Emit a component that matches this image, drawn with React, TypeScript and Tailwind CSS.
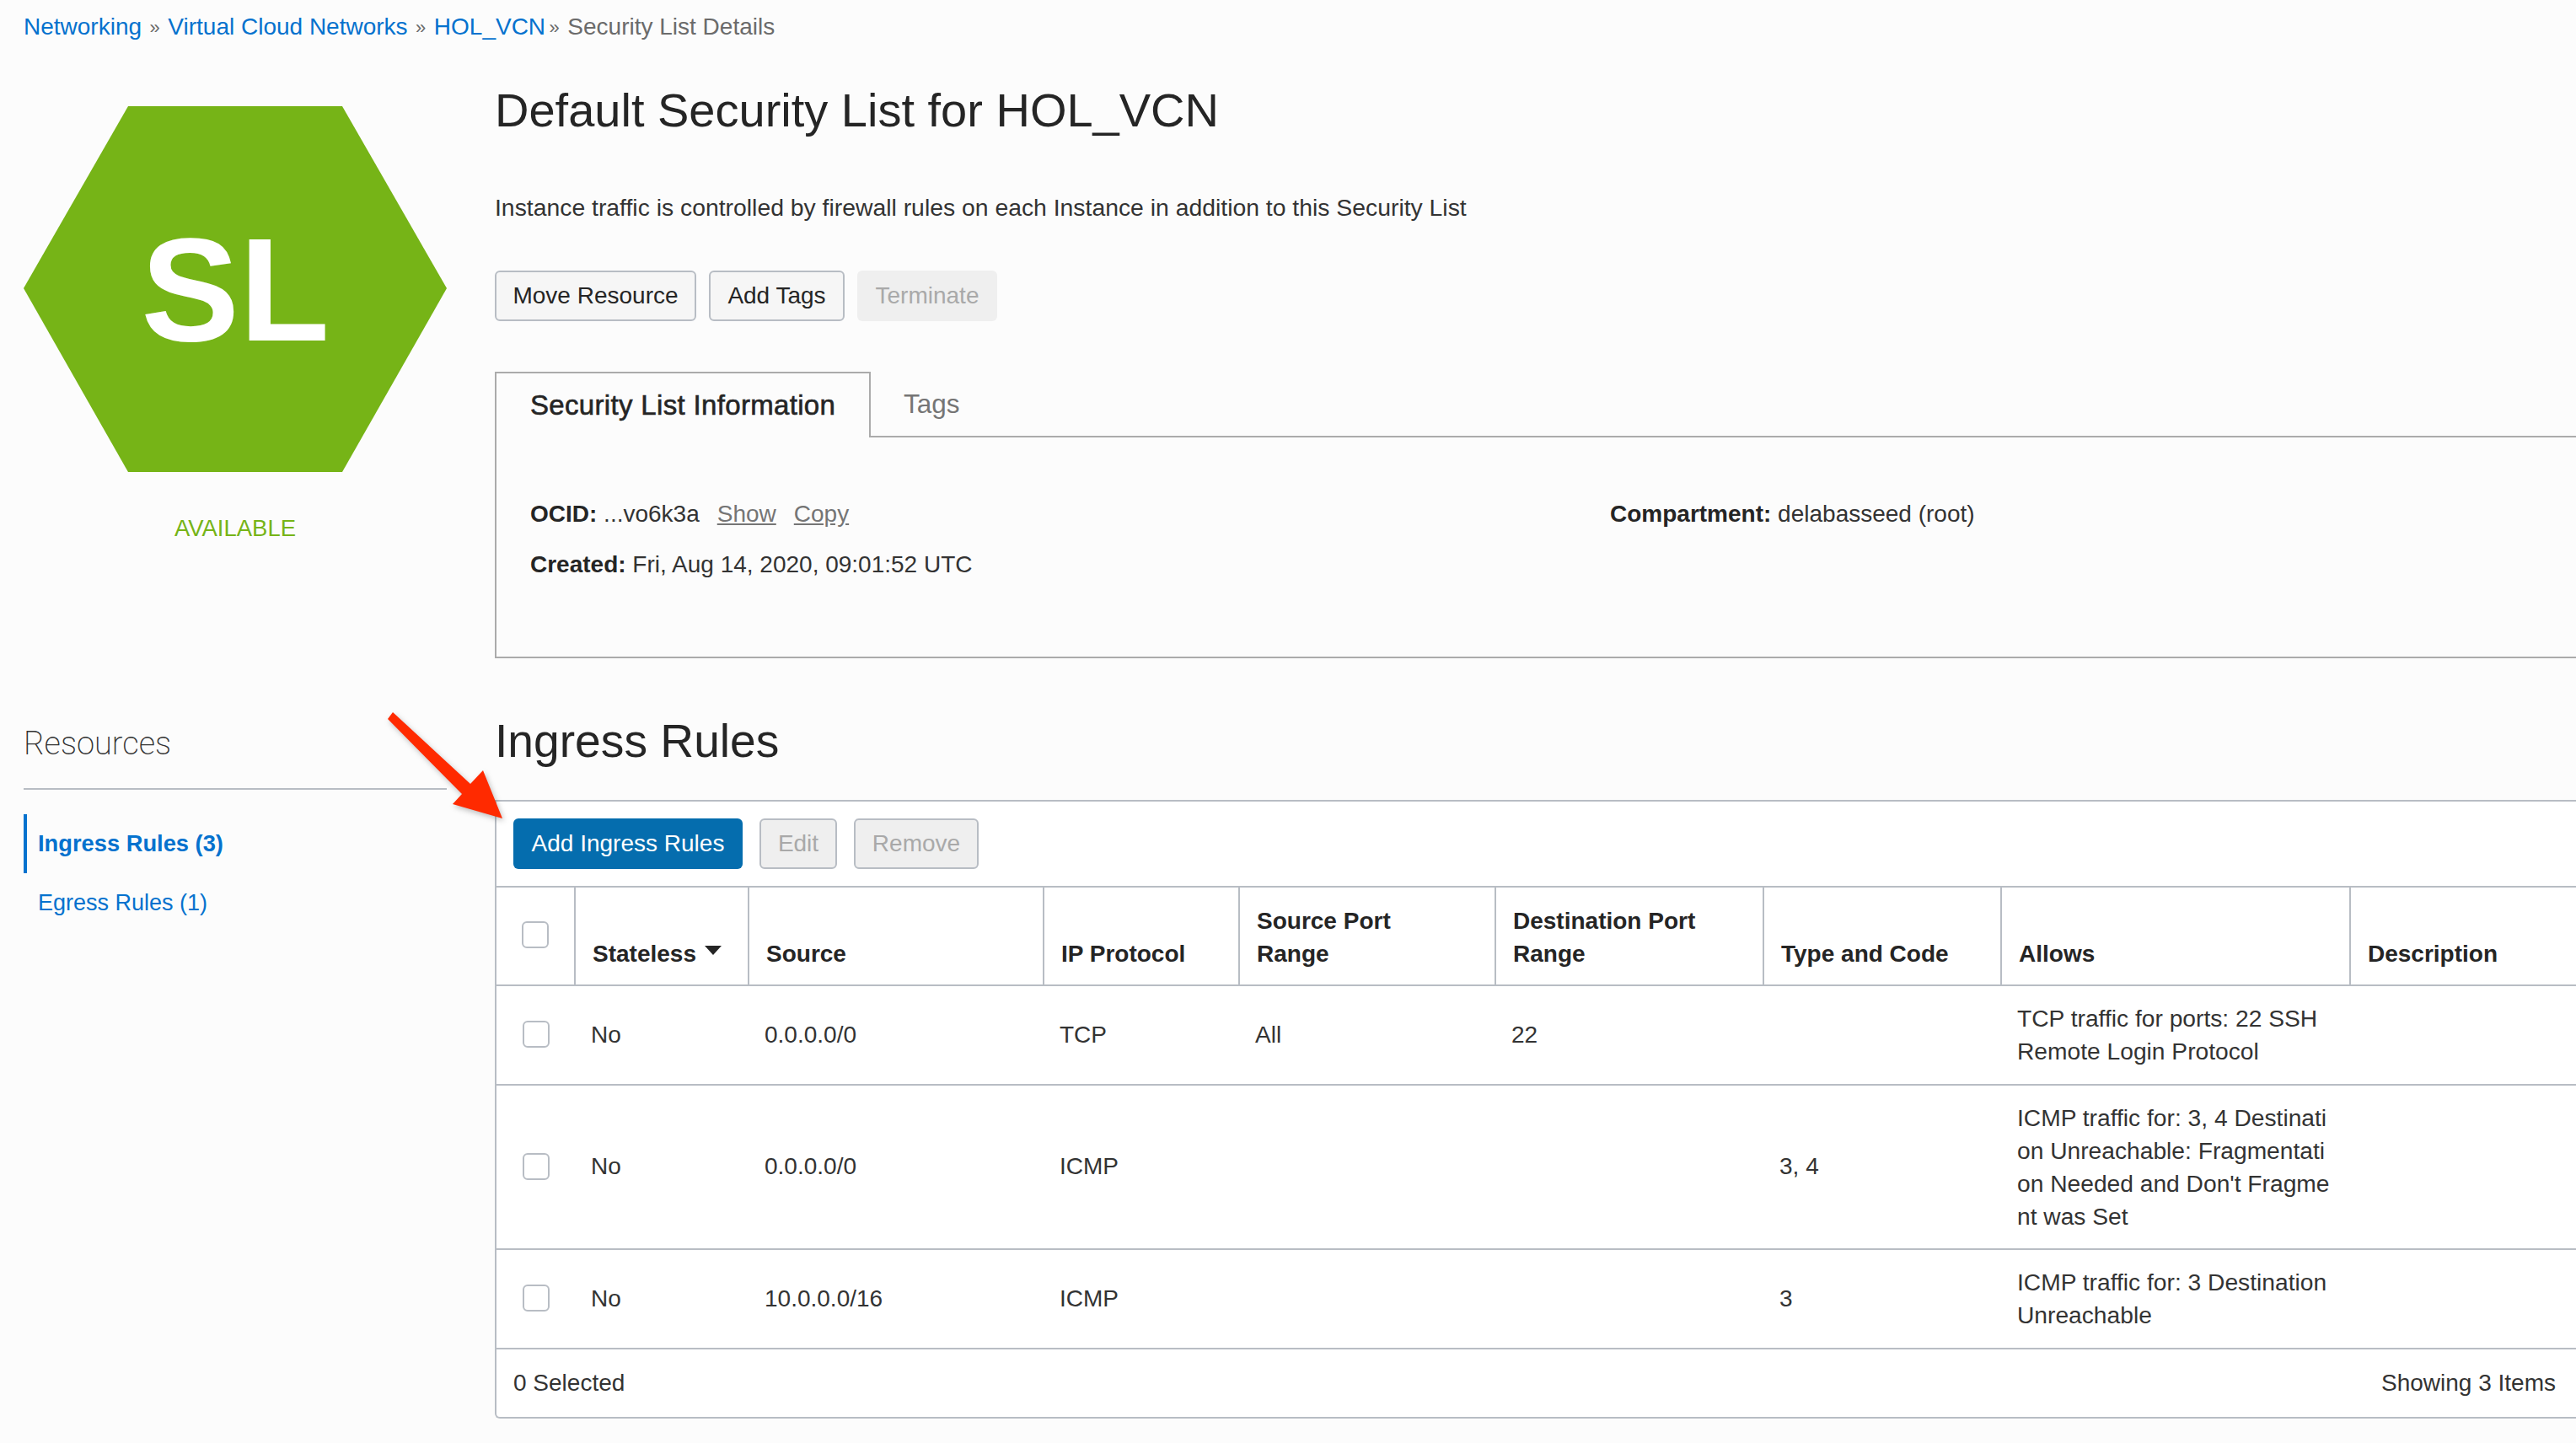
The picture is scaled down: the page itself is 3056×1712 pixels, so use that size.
const FONT = "font-['Liberation_Sans',Arial,sans-serif]";

const COLS = [93, 206, 350, 232, 304, 318, 282, 414];

const ROWS = [
  {
    h: "h-[118px]",
    source: "0.0.0.0/0",
    proto: "TCP",
    port: "All",
    dest: "22",
    type: "",
    allows: ["TCP traffic for ports: 22 SSH", "Remote Login Protocol"],
  },
  {
    h: "h-[195px]",
    source: "0.0.0.0/0",
    proto: "ICMP",
    port: "",
    dest: "",
    type: "3, 4",
    allows: ["ICMP traffic for: 3, 4 Destinati", "on Unreachable: Fragmentati", "on Needed and Don't Fragme", "nt was Set"],
  },
  {
    h: "h-[118px]",
    source: "10.0.0.0/16",
    proto: "ICMP",
    port: "",
    dest: "",
    type: "3",
    allows: ["ICMP traffic for: 3 Destination", "Unreachable"],
  },
];

function Checkbox({ className = "" }: { className?: string }) {
  return <div className={`w-8 h-8 rounded-md border-2 border-[#b8bdc4] bg-white mx-auto ${className}`} />;
}

function Th({ children, last }: { children?: React.ReactNode; last?: boolean }) {
  return (
    <th className={`align-bottom text-left font-bold text-[#252525] leading-[39px] pl-[20px] pr-2 pb-[17px] ${last ? "" : "border-r-2 border-[#b8bdc4]"}`}>
      {children}
    </th>
  );
}

function Td({ children }: { children?: React.ReactNode }) {
  return <td className="pl-[19px] pb-[1px] text-[#333333] align-middle">{children}</td>;
}

export default function App() {
  return (
    <div className={`${FONT} relative w-[3056px] h-[1712px] overflow-hidden bg-[#fcfcfc] text-[28px] text-[#2f2f2f]`}>
      {/* Breadcrumb */}
      <div className="h-[64px] pl-7 flex items-center gap-[9.5px] text-[#6b6b6b]">
        <span className="text-[#0572ce]">Networking</span>
        <span className="text-[22px]">»</span>
        <span className="text-[#0572ce]">Virtual Cloud Networks</span>
        <span className="text-[22px]">»</span>
        <span className="text-[#0572ce]">HOL_VCN</span>
        <span className="text-[22px] -ml-[5px]">»</span>
        <span>Security List Details</span>
      </div>

      <div className="grid grid-cols-[502px_minmax(0,1fr)] gap-x-[57px] pl-7">
        {/* Hexagon and state */}
        <div className="pt-[62px]">
          <div className="h-[434px] bg-[#76b417] [clip-path:polygon(124px_0,378px_0,502px_216px,378px_434px,124px_434px,0_216px)] flex items-center justify-center">
            <span className="text-white font-bold text-[175px] leading-none">SL</span>
          </div>
          <div className="mt-[50px] text-center text-[#76b417] text-[27.5px] leading-[34px]">AVAILABLE</div>
        </div>

        {/* Details */}
        <div>
          <h1 className="text-[56px] leading-[64px] text-[#252525] mt-[35px]">Default Security List for HOL_VCN</h1>
          <p className="mt-[65px] leading-[36px] text-[#333333] text-[28.35px]">
            Instance traffic is controlled by firewall rules on each Instance in addition to this Security List
          </p>
          <div className="mt-[57px] flex gap-[15px]">
            <button className="h-[60px] w-[239px] rounded-md border-2 border-[#b8bdc4] bg-[#f6f6f6] text-[#252525]">Move Resource</button>
            <button className="h-[60px] w-[161px] rounded-md border-2 border-[#b8bdc4] bg-[#f6f6f6] text-[#252525]">Add Tags</button>
            <button className="h-[60px] w-[166px] rounded-md bg-[#efefef] text-[#a9a9a9]">Terminate</button>
          </div>
          <div className="mt-[60px] flex h-[78px]">
            <div className="w-[446px] pl-[40px] flex items-center border-t-2 border-l-2 border-r-2 border-[#ababab] text-[33px] tracking-[0.33px] [-webkit-text-stroke:0.6px_#252525] text-[#252525]">
              Security List Information
            </div>
            <div className="flex-1 flex items-center pl-[39px] pt-[1px] border-b-2 border-[#ababab] text-[31.5px] text-[#757575]">Tags</div>
          </div>
          <div className="h-[262px] border-l-2 border-b-2 border-[#ababab] pl-[40px] pt-[70px] flex text-[#333333]">
            <div className="w-[1281px]">
              <div className="h-[60px]">
                <b className="text-[#252525]">OCID:</b> ...vo6k3a
                <span className="ml-[21px] underline text-[#757575]">Show</span>
                <span className="ml-[21px] underline text-[#757575]">Copy</span>
              </div>
              <div>
                <b className="text-[#252525]">Created:</b> Fri, Aug 14, 2020, 09:01:52 UTC
              </div>
            </div>
            <div>
              <b className="text-[#252525]">Compartment:</b> delabasseed (root)
            </div>
          </div>
        </div>

        {/* Resources */}
        <div className="pt-[76px]">
          <div className="h-[80px] border-b-2 border-[#b8bdc4] font-['Roboto',sans-serif] text-[38px] font-extralight text-[#333333] leading-[50px]">Resources</div>
          <div className="mt-[29px] h-[70px] border-l-4 border-[#0572ce] pl-[13px] flex items-center font-bold text-[27.3px] text-[#0572ce]">Ingress Rules (3)</div>
          <div className="mt-[14px] pl-[17px] leading-[42px] text-[27px] text-[#0572ce]">Egress Rules (1)</div>
        </div>

        {/* Ingress rules */}
        <div className="pt-[66px] min-w-0">
          <h2 className="text-[55.2px] leading-[64px] text-[#252525]">Ingress Rules</h2>
          <div className="mt-[38px] bg-white border-t-2 border-l-2 border-b-2 border-[#b8bdc4] rounded-bl-md">
            <div className="h-[100px] flex items-start gap-[20px] pl-[20px] pt-[20px]">
              <button className="h-[60px] w-[272px] rounded-md bg-[#056dae] text-white">Add Ingress Rules</button>
              <button className="h-[60px] w-[92px] rounded-md border-2 border-[#b8bdc4] bg-[#efefef] text-[#a9a9a9]">Edit</button>
              <button className="h-[60px] w-[148px] rounded-md border-2 border-[#b8bdc4] bg-[#efefef] text-[#a9a9a9]">Remove</button>
            </div>
            <table className="table-fixed border-collapse w-full">
              <colgroup>
                {COLS.map((w, i) => (
                  <col key={i} style={{ width: w }} />
                ))}
                <col />
              </colgroup>
              <thead>
                <tr className="h-[117px] border-t-2 border-b-2 border-[#b8bdc4]">
                  <th className="border-r-2 border-[#b8bdc4] align-middle">
                    <Checkbox className="-mt-[4px]" />
                  </th>
                  <Th>
                    <span className="inline-flex items-center gap-[10px]">
                      Stateless
                      <svg width="20" height="11" viewBox="0 0 20 11" className="-mt-2">
                        <path d="M0 0h20L10 11z" fill="#252525" />
                      </svg>
                    </span>
                  </Th>
                  <Th>Source</Th>
                  <Th>IP Protocol</Th>
                  <Th>Source Port<br />Range</Th>
                  <Th>Destination Port<br />Range</Th>
                  <Th>Type and Code</Th>
                  <Th>Allows</Th>
                  <Th last>Description</Th>
                </tr>
              </thead>
              <tbody>
                {ROWS.map((r, i) => (
                  <tr key={i} className={`${r.h} border-b-2 border-[#b8bdc4]`}>
                    <td><Checkbox className="-mt-[2px]" /></td>
                    <Td>No</Td>
                    <Td>{r.source}</Td>
                    <Td>{r.proto}</Td>
                    <Td>{r.port}</Td>
                    <Td>{r.dest}</Td>
                    <Td>{r.type}</Td>
                    <td className="pl-[19px] text-[#333333] text-[28.2px] leading-[39px] whitespace-nowrap">
                      {r.allows.map((l) => (
                        <div key={l}>{l}</div>
                      ))}
                    </td>
                    <td />
                  </tr>
                ))}
              </tbody>
            </table>
            <div className="h-[80px] flex items-center justify-between pl-[20px] pr-[24px] text-[#333333]">
              <span>0 Selected</span>
              <span>Showing 3 Items</span>
            </div>
          </div>
        </div>
      </div>

      {/* Callout arrow */}
      <svg className="absolute left-[440px] top-[830px] drop-shadow-[2px_3px_3px_rgba(0,0,0,0.25)]" width="180" height="160" viewBox="440 830 180 160">
        <path d="M466 845L558 930L573 914L596 971L537 954L548 942L460 853Z" fill="#ff2a00" />
      </svg>
    </div>
  );
}
